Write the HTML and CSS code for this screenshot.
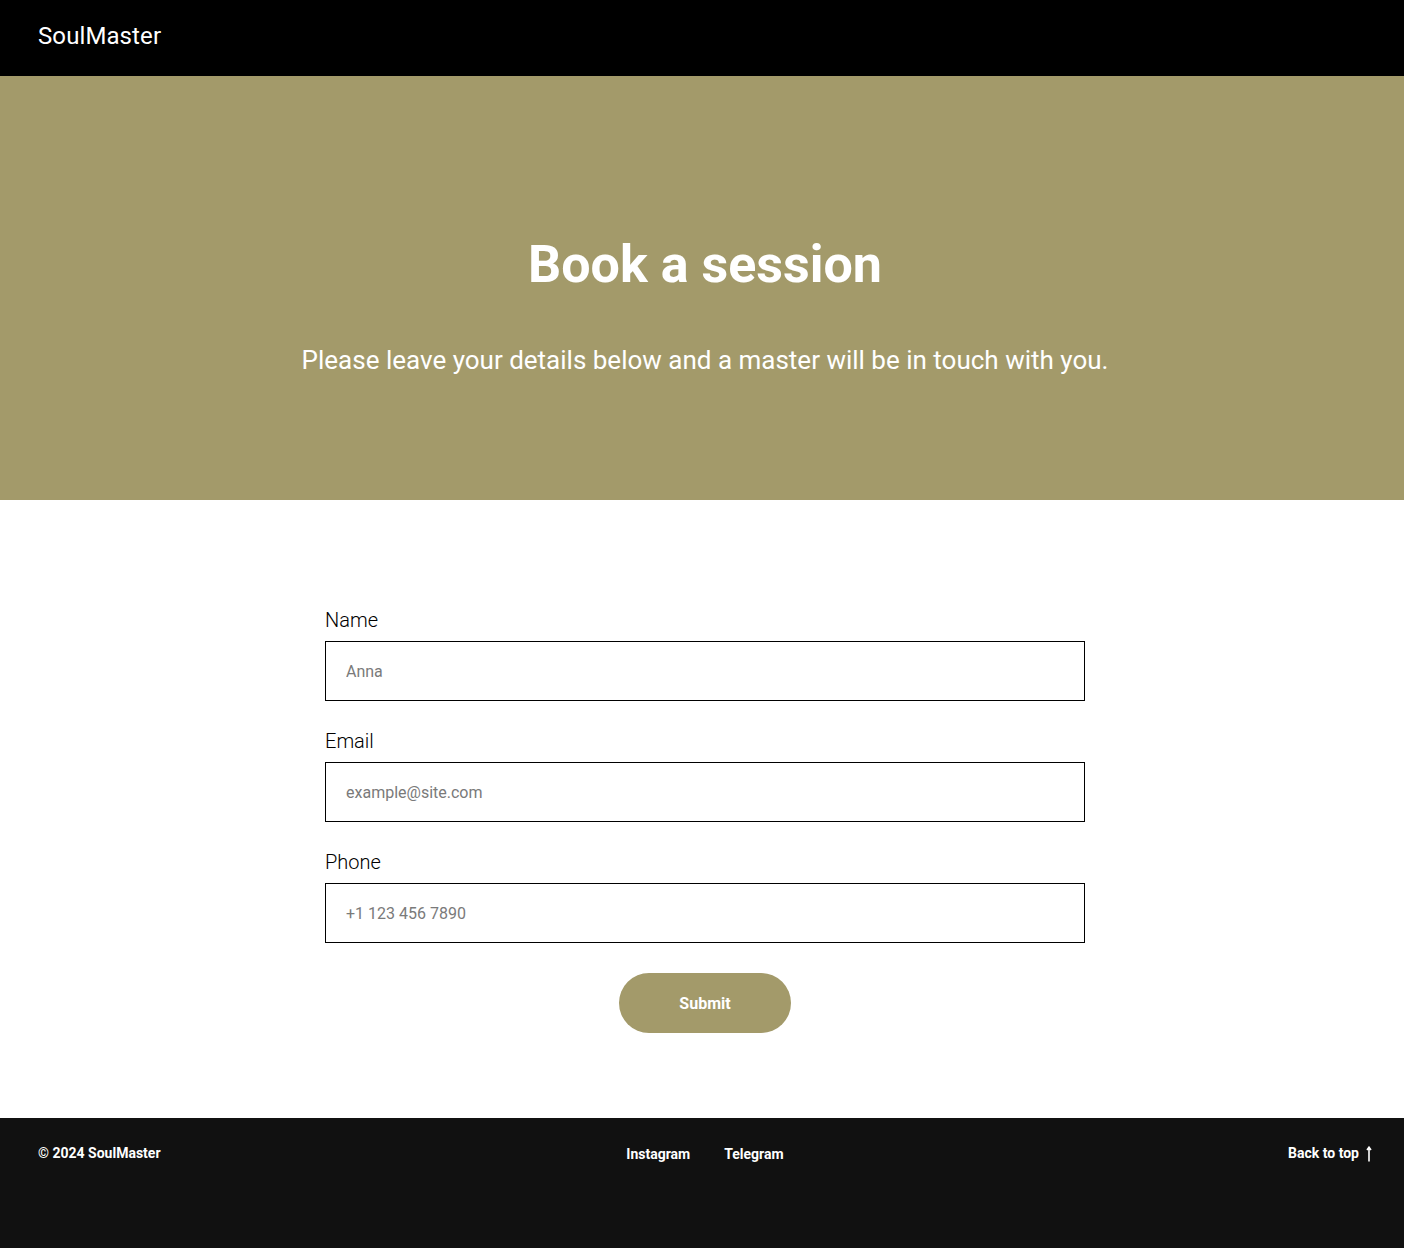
FILE: index.html
```html
<!DOCTYPE html>
<html lang="en">
<head>
<meta charset="utf-8">
<title>SoulMaster — Book a session</title>
<link rel="stylesheet" href="styles.css">
</head>
<body>
<header class="topbar">
  <a class="logo" href="#">SoulMaster</a>
</header>
<section class="hero">
  <h1 class="hero-title">Book a session</h1>
  <p class="hero-sub">Please leave your details below and a master will be in touch with you.</p>
</section>
<main class="form-section">
  <form class="booking-form">
    <label class="field">
      <span class="field-label">Name</span>
      <input class="field-input" type="text" placeholder="Anna">
    </label>
    <label class="field">
      <span class="field-label">Email</span>
      <input class="field-input" type="email" placeholder="example@site.com">
    </label>
    <label class="field">
      <span class="field-label">Phone</span>
      <input class="field-input" type="tel" placeholder="+1 123 456 7890">
    </label>
    <button class="submit" type="button">Submit</button>
  </form>
</main>
<footer class="footer">
  <div class="copy">© 2024 SoulMaster</div>
  <nav class="social">
    <a href="#">Instagram</a>
    <a href="#">Telegram</a>
  </nav>
  <a class="back-top" href="#">Back to top
    <svg width="6" height="16" viewBox="0 0 6 16" aria-hidden="true"><path d="M3 15.5V1.5M1 4L3 1.2L5 4" fill="none" stroke="#fff" stroke-width="1.6"/></svg>
  </a>
</footer>
</body>
</html>
```
FILE: styles.css
```css
* { box-sizing: border-box; }
html, body { margin: 0; padding: 0; }
body {
  font-family: Roboto, "Liberation Sans", sans-serif;
  color: #000;
  background: #fff;
}
a { color: inherit; text-decoration: none; }

.topbar {
  height: 76px;
  background: #000;
  display: flex;
  align-items: center;
  padding: 0 38px 4px;
}
.logo {
  color: #fff;
  font-size: 24px;
  font-weight: 400;
  letter-spacing: 0.1px;
}

.hero {
  height: 424px;
  background: #a39a6a;
  color: #fff;
  display: flex;
  flex-direction: column;
  align-items: center;
  justify-content: center;
  text-align: center;
  padding: 36px 0 0 6px;
}
.hero-title {
  margin: 0;
  font-size: 52px;
  font-weight: 700;
  line-height: 60px;
}
.hero-sub {
  margin: 48px 0 0;
  font-size: 26px;
  font-weight: 400;
  line-height: 34px;
}

.form-section {
  display: flex;
  justify-content: center;
  padding: 108px 0 85px 6px;
}
.booking-form {
  width: 760px;
  display: flex;
  flex-direction: column;
  align-items: center;
  gap: 28px;
}
.field {
  width: 100%;
  display: flex;
  flex-direction: column;
  gap: 9px;
}
.field-label {
  font-size: 20px;
  font-weight: 300;
  line-height: 24px;
}
.field-input {
  height: 60px;
  width: 100%;
  border: 1px solid #000;
  border-radius: 0;
  padding: 0 20px;
  font-family: inherit;
  font-size: 16px;
  color: #000;
  outline: none;
}
.field-input::placeholder { color: #7a7a7a; }
.submit {
  margin-top: 2px;
  width: 172px;
  height: 60px;
  border: 0;
  border-radius: 30px;
  background: #a39a6a;
  color: #fff;
  font-family: inherit;
  font-size: 16px;
  font-weight: 700;
}

.footer {
  height: 130px;
  background: #111;
  color: #fff;
  display: grid;
  grid-template-columns: 1fr auto 1fr;
  align-items: start;
  padding: 26px 32px 0 38px;
  font-size: 14px;
  font-weight: 700;
}
.copy { line-height: 18px; }
.social {
  display: flex;
  gap: 34px;
  line-height: 18px;
  padding-top: 1px;
}
.back-top {
  justify-self: end;
  display: flex;
  align-items: center;
  gap: 7px;
  line-height: 18px;
}
.back-top svg { margin-top: 1px; }
```
